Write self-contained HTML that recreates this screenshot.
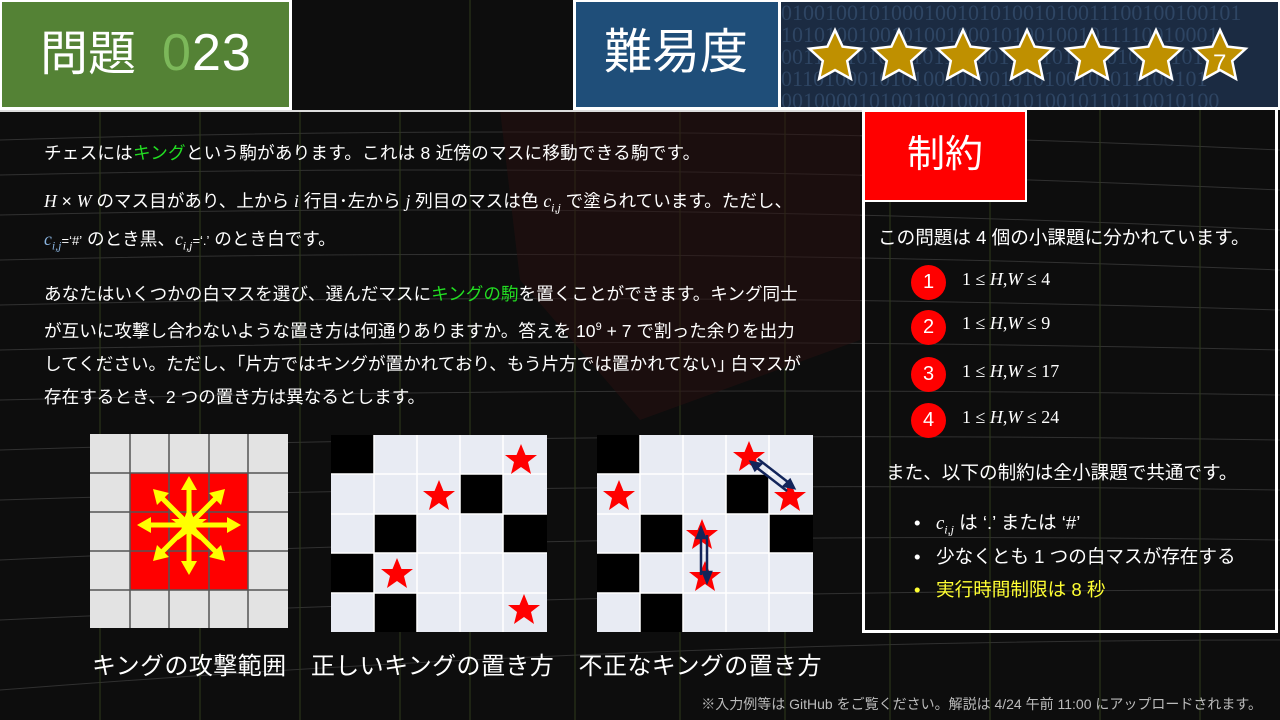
<!DOCTYPE html>
<html><head><meta charset="utf-8"><style>
*{margin:0;padding:0;box-sizing:border-box}
body{width:1280px;height:720px;overflow:hidden;background:#0d0d0d;font-family:"Liberation Sans","Noto Sans CJK JP",sans-serif;color:#fff;position:relative}
.a{position:absolute;white-space:nowrap}
.m{font-family:"Liberation Serif","DejaVu Serif",serif;font-style:italic}
.g{color:#22dd22}
</style></head><body>
<svg class="a" style="left:0;top:0" width="1280" height="720">
<g stroke="#3a3a3a" stroke-width="1" fill="none" opacity=".8">
<path d="M0 140 Q640 120 1280 150"/><path d="M0 175 Q640 160 1280 190"/><path d="M0 215 Q640 200 1280 230"/><path d="M0 260 Q640 245 1280 270"/><path d="M0 305 Q640 290 1280 310"/><path d="M0 350 Q640 335 1280 350"/><path d="M0 400 Q640 385 1280 395"/><path d="M0 450 Q640 430 1280 440"/><path d="M0 500 Q640 480 1280 490"/><path d="M0 560 Q640 530 1280 540"/><path d="M0 620 Q640 590 1280 590"/><path d="M0 690 Q640 640 1280 640"/>
</g>
<g stroke="#2e3a1a" stroke-width="1"><path d="M470 0V720M575 0V720M680 0V720M785 0V720M890 110V720M990 110V720M1100 110V720M1200 110V720M100 110V720M200 110V720M300 110V720M400 110V720"/></g>
<path d="M500 110 L860 110 L860 340 L640 420 L520 280Z" fill="#2a1010" opacity=".5"/>
</svg>
<div class="a" style="left:0;top:110px;width:863px;height:2px;background:#ddd"></div>
<div class="a" style="left:0;top:0;width:292px;height:110px;background:#fff"></div>
<div class="a" style="left:2px;top:2px;width:287px;height:105px;background:#548235"></div>
<div class="a" style="left:40px;top:25px;font-size:48px;line-height:56px">問題<span style="margin-left:26px;font-size:52px;letter-spacing:1px"><span style="color:#7cb85a">0</span>23</span></div>
<div class="a" style="left:573px;top:0;width:707px;height:110px;background:#fff"></div>
<div class="a" style="left:576px;top:2px;width:202px;height:105px;background:#1f4e79"></div>
<div class="a" style="left:604px;top:25px;font-size:48px;line-height:56px">難易度</div>
<div class="a" style="left:781px;top:2px;width:497px;height:105px;background:#1b2b42;overflow:hidden;color:#2e4563;font-family:'Liberation Serif',serif;font-size:22px;line-height:22px">010010010100010010101001010011100100100101<br>1010100100101001000101001001011110010001<br>00111010100010110100110110101101001110101<br>011010001010100101001010100101011100101<br>0010000101001001000101010010110110010100</div>
<svg class="a" style="left:781px;top:2px" width="497" height="105">
<defs><polygon id="st" points="0,-27 7.6,-10.4 25.7,-8.3 12.2,4 15.9,21.8 0,13 -15.9,21.8 -12.2,4 -25.7,-8.3 -7.6,-10.4" fill="#bf9000" stroke="#fff" stroke-width="2.5"/></defs>
<use href="#st" x="54" y="55"/><use href="#st" x="118" y="55"/><use href="#st" x="182" y="55"/><use href="#st" x="246" y="55"/><use href="#st" x="311" y="55"/><use href="#st" x="375" y="55"/><use href="#st" x="439" y="55"/>
<text x="432" y="69" font-size="24" fill="#fff" font-family="Liberation Sans">7</text>
</svg>

<div class="a" style="left:44px;top:140px;font-size:17.6px;letter-spacing:0.2px">チェスには<span class="g">キング</span>という駒があります。これは 8 近傍のマスに移動できる駒です。</div>
<div class="a" style="left:44px;top:188px;font-size:17.6px"><span class="m">H</span> × <span class="m">W</span> のマス目があり、上から <span class="m">i</span> 行目･左から <span class="m">j</span> 列目のマスは色 <span class="m">c<sub style="font-size:12px">i,j</sub></span> で塗られています。ただし、</div>
<div class="a" style="left:44px;top:226px;font-size:17.6px"><span class="m" style="color:#8ab4e0">c<sub style="font-size:12px">i,j</sub></span><span style="font-size:13px">=‘#’</span> のとき黒、<span class="m">c<sub style="font-size:12px">i,j</sub></span><span style="font-size:13px">=‘.’</span> のとき白です。</div>
<div class="a" style="left:44px;top:278px;font-size:17.6px;line-height:33px">あなたはいくつかの白マスを選び、選んだマスに<span class="g">キングの駒</span>を置くことができます。キング同士<br>が互いに攻撃し合わないような置き方は何通りありますか。答えを 10<sup style="font-size:11px">9</sup> + 7 で割った余りを出力<br>してください。ただし、｢片方ではキングが置かれており、もう片方では置かれてない｣ 白マスが<br>存在するとき、2 つの置き方は異なるとします。</div>

<svg class="a" style="left:0;top:0" width="863" height="720">
<rect x="90" y="434" width="198" height="194" fill="#e3e3e3"/>
<rect x="130" y="473" width="118" height="117" fill="#f00"/>
<g stroke="#555" stroke-width="1.5"><path d="M130 434V628M169 434V628M209 434V628M248 434V628M90 473H288M90 512H288M90 551H288M90 590H288"/></g>
<g stroke="#ff0" stroke-width="5" fill="#ff0">
<path d="M189 525V565M189 525V488M189 525H148M189 525H230M189 525L160 496M189 525L218 496M189 525L160 554M189 525L218 554"/>
</g>
<g fill="#ff0"><polygon points="189,476 181,490 197,490"/><polygon points="189,575 181,561 197,561"/><polygon points="137,525 151,517 151,533"/><polygon points="241,525 227,517 227,533"/><polygon points="153,489 169,493 157,505"/><polygon points="225,489 209,493 221,505"/><polygon points="153,561 169,557 157,545"/><polygon points="225,561 209,557 221,545"/>
<polygon points="189,506 194,519 207,519 196,527 200,540 189,532 178,540 182,527 171,519 184,519"/></g>

<defs><polygon id="rs" points="0,-16 4.5,-5 16,-5 7,2 10,14 0,7 -10,14 -7,2 -16,-5 -4.5,-5" fill="#f00"/></defs>
<g transform="translate(331,435)">
<rect width="216" height="197" fill="#e8ebf3"/>
<g fill="#000"><rect x="0" y="0" width="43" height="39"/><rect x="129" y="39" width="43" height="40"/><rect x="43" y="79" width="43" height="39"/><rect x="172" y="79" width="44" height="39"/><rect x="0" y="118" width="43" height="40"/><rect x="43" y="158" width="43" height="39"/></g>
<g stroke="#fff" stroke-width="1.5"><path d="M43 0V197M86 0V197M129 0V197M172 0V197M0 39H216M0 79H216M0 118H216M0 158H216"/></g>
<use href="#rs" x="190" y="25"/><use href="#rs" x="108" y="61"/><use href="#rs" x="66" y="139"/><use href="#rs" x="193" y="175"/>
</g>
<g transform="translate(597,435)">
<rect width="216" height="197" fill="#e8ebf3"/>
<g fill="#000"><rect x="0" y="0" width="43" height="39"/><rect x="129" y="39" width="43" height="40"/><rect x="43" y="79" width="43" height="39"/><rect x="172" y="79" width="44" height="39"/><rect x="0" y="118" width="43" height="40"/><rect x="43" y="158" width="43" height="39"/></g>
<g stroke="#fff" stroke-width="1.5"><path d="M43 0V197M86 0V197M129 0V197M172 0V197M0 39H216M0 79H216M0 118H216M0 158H216"/></g>
<use href="#rs" x="152" y="22"/><use href="#rs" x="22" y="61"/><use href="#rs" x="193" y="62"/><use href="#rs" x="105" y="100"/><use href="#rs" x="108" y="142"/>
<g stroke="#13255a" stroke-width="2.5" fill="#13255a"><path d="M155 29L190 56M161 24L196 51M104 100V140M110 100V140"/>
<polygon points="154,27 164,29 158,35"/><polygon points="197,53 187,51 193,45"/><polygon points="104,93 100,103 108,103"/><polygon points="110,147 106,137 114,137"/></g>
</g>
</svg>
<div class="a" style="left:92px;top:646px;font-size:24px;letter-spacing:0.4px">キングの攻撃範囲　正しいキングの置き方　不正なキングの置き方</div>
<div class="a" style="right:18px;top:694px;font-size:14px;color:#bbb">※入力例等は GitHub をご覧ください。解説は 4/24 午前 11:00 にアップロードされます。</div>

<div class="a" style="left:862px;top:110px;width:416px;height:523px;border:3px solid #fff;border-top:none"></div>
<div class="a" style="left:862px;top:110px;width:165px;height:92px;background:#fff"></div>
<div class="a" style="left:865px;top:112px;width:160px;height:88px;background:#f00;font-size:38px;text-align:center;line-height:86px">制約</div>
<div class="a" style="left:878px;top:223px;font-size:18.6px">この問題は 4 個の小課題に分かれています。</div>
<div class="a" style="left:911px;top:265px;width:35px;height:35px;border-radius:50%;background:#f00;font-size:20px;text-align:center;line-height:35px">1</div>
<div class="a" style="left:911px;top:310px;width:35px;height:35px;border-radius:50%;background:#f00;font-size:20px;text-align:center;line-height:35px">2</div>
<div class="a" style="left:911px;top:357px;width:35px;height:35px;border-radius:50%;background:#f00;font-size:20px;text-align:center;line-height:35px">3</div>
<div class="a" style="left:911px;top:403px;width:35px;height:35px;border-radius:50%;background:#f00;font-size:20px;text-align:center;line-height:35px">4</div>
<div class="a" style="left:962px;top:269px;font-size:18px;font-family:'Liberation Serif',serif">1 ≤ <i>H</i>,<i>W</i> ≤ 4</div>
<div class="a" style="left:962px;top:313px;font-size:18px;font-family:'Liberation Serif',serif">1 ≤ <i>H</i>,<i>W</i> ≤ 9</div>
<div class="a" style="left:962px;top:361px;font-size:18px;font-family:'Liberation Serif',serif">1 ≤ <i>H</i>,<i>W</i> ≤ 17</div>
<div class="a" style="left:962px;top:407px;font-size:18px;font-family:'Liberation Serif',serif">1 ≤ <i>H</i>,<i>W</i> ≤ 24</div>
<div class="a" style="left:886px;top:458px;font-size:18.6px">また、以下の制約は全小課題で共通です。</div>
<div class="a" style="left:914px;top:508px;font-size:18.6px">•&nbsp;&nbsp;&nbsp;<span class="m">c<sub style="font-size:12px">i,j</sub></span> は ‘.’ または ‘#’</div>
<div class="a" style="left:914px;top:542px;font-size:18.6px">•&nbsp;&nbsp;&nbsp;少なくとも 1 つの白マスが存在する</div>
<div class="a" style="left:914px;top:575px;font-size:18.6px;color:#ffff33">•&nbsp;&nbsp;&nbsp;実行時間制限は 8 秒</div>
</body></html>
